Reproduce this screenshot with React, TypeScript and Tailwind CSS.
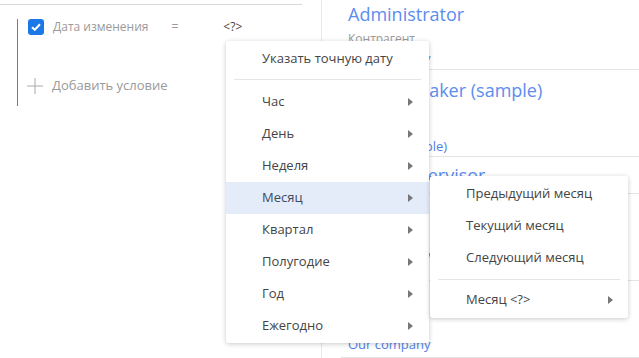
import React from 'react';

const mainItems = ['Час', 'День', 'Неделя', 'Месяц', 'Квартал', 'Полугодие', 'Год', 'Ежегодно'];
const subItems = ['Предыдущий месяц', 'Текущий месяц', 'Следующий месяц'];

const Caret = () => (
  <svg width="5" height="8" viewBox="0 0 5 8" className="shrink-0">
    <path d="M0 0 L5 4 L0 8 Z" fill="#777" />
  </svg>
);

const Row = ({ h, pt, title, label, link, gap }: { h: string; pt: string; title?: string; label?: string; link?: string; gap?: string }) => (
  <div className={`ml-[19px] pl-[7px] border-b border-[#e4e4e4] ${h} ${pt}`}>
    {title && <div className="text-[18px] leading-[24px] text-[#5b8def] whitespace-nowrap">{title}</div>}
    {label && <div className="mt-[5px] text-[12px] leading-[16px] text-[#9a9a9a]">{label}</div>}
    {link && <div className={`${gap ?? 'mt-[1px]'} text-[13px] leading-[18px] text-[#4f7fe6] whitespace-nowrap`}>{link}</div>}
  </div>
);

export default function App() {
  return (
    <div
      className="relative flex w-[639px] h-[358px] overflow-hidden bg-white"
      style={{ fontFamily: '"Open Sans", "Noto Sans", sans-serif' }}
    >
      {/* left: filter conditions */}
      <div className="w-[322px] shrink-0 border-r border-[#e8e8e8]">
        <div className="h-[5px] w-[302px] border-b border-[#d9d9d9]" />
        <div className="mt-[14px] ml-[17px] h-[87px] border-l border-[#1e9bd7] pl-[10px]">
          <div className="mt-[3px] flex items-center h-[16px]">
            <div className="w-[16px] h-[16px] rounded-[3px] bg-[#1b78e6] flex items-center justify-center">
              <svg width="10" height="8" viewBox="0 0 10 8">
                <path d="M1 4.2 L3.8 6.8 L9 1.2" stroke="white" strokeWidth="2" fill="none" />
              </svg>
            </div>
            <span className="ml-[9px] text-[12px] text-[#9a9a9a] whitespace-nowrap">Дата изменения</span>
            <span className="ml-[23px] text-[12px] text-[#9a9a9a]">=</span>
            <span className="ml-[45px] text-[12px] text-[#444]">&lt;?&gt;</span>
          </div>
          <div className="mt-[42px] flex items-center h-[18px] -ml-[1px]">
            <svg width="16" height="16" viewBox="0 0 16 16">
              <path d="M8 0 V16 M0 8 H16" stroke="#aaa" strokeWidth="1" />
            </svg>
            <span className="ml-[9px] text-[13px] text-[#9a9a9a] whitespace-nowrap">Добавить условие</span>
          </div>
        </div>
      </div>

      {/* right: list */}
      <div className="flex-1">
        <Row h="h-[70px]" pt="pt-[2px]" title="Administrator" label="Контрагент" link="Our company" gap="mt-[2px]" />
        <Row h="h-[87px]" pt="pt-[8px]" title="Andrew Baker (sample)" label="Контрагент" link="Vendor (sample)" gap="mt-[14px]" />
        <Row h="h-[37px]" pt="pt-[6px]" title="Sales Supervisor" />
        <Row h="h-[87px]" pt="pt-[6px]" title="Contact" label="Контрагент" link="Our company" />
        <Row h="h-[77px]" pt="pt-[6px]" title="Manager" label="Контрагент" link="Our company" gap="mt-[3px]" />
      </div>

      {/* main dropdown */}
      <div className="absolute left-[226px] top-[41px] w-[203px] h-[302px] bg-white rounded-[3px] shadow-[0_1px_5px_rgba(0,0,0,0.22)] pt-[2px] text-[13px] text-[#444]">
        <div className="h-[32px] flex items-center pl-[36px]">Указать точную дату</div>
        <div className="mt-[4px] mb-[6px] mx-[8px] border-t border-[#e5e5e5]" />
        {mainItems.map((item) => (
          <div
            key={item}
            className={`h-[32px] flex items-center justify-between pl-[36px] pr-[16px] ${item === 'Месяц' ? 'bg-[#e4ebf9] text-[#3e4a5e]' : ''}`}
          >
            <span>{item}</span>
            <Caret />
          </div>
        ))}
      </div>

      {/* submenu */}
      <div className="absolute left-[430px] top-[176px] w-[198px] h-[142px] bg-white rounded-[3px] shadow-[0_1px_5px_rgba(0,0,0,0.22)] pt-[2px] text-[13px] text-[#444]">
        {subItems.map((item) => (
          <div key={item} className="h-[32px] flex items-center pl-[36px]">
            {item}
          </div>
        ))}
        <div className="mt-[5px] mb-[4px] mx-[8px] border-t border-[#e5e5e5]" />
        <div className="h-[32px] flex items-center justify-between pl-[36px] pr-[15px]">
          <span>Месяц &lt;?&gt;</span>
          <Caret />
        </div>
      </div>
    </div>
  );
}
